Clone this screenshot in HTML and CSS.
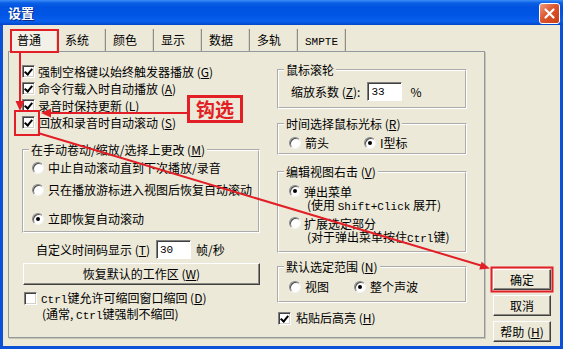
FILE: index.html
```html
<!DOCTYPE html>
<html lang="zh-CN">
<head>
<meta charset="utf-8">
<title>设置</title>
<link rel="stylesheet" href="styles.css">
</head>
<body>
<div class="win">
  <div class="titlebar">
    <span class="title">设置</span>
    <span class="close"><svg width="13" height="13" viewBox="0 0 13 13"><path d="M2.5 2.5 L10.5 10.5 M10.5 2.5 L2.5 10.5" stroke="#fff" stroke-width="2.2" stroke-linecap="round"/></svg></span>
  </div>
  <div class="client">
    <div class="tabarea">
      <div class="tabs">
        <div class="tab sel">普通</div>
        <div class="tab">系统</div>
        <div class="tab">颜色</div>
        <div class="tab">显示</div>
        <div class="tab">数据</div>
        <div class="tab">多轨</div>
        <div class="tab"><span class="m">SMPTE</span></div>
      </div>
      <div class="panel">
        <div class="col">
          <div class="chk-list">
            <div class="row"><span class="cb on"></span><span>强制空格键以始终触发器播放 (<u>G</u>)</span></div>
            <div class="row"><span class="cb on"></span><span>命令行载入时自动播放 (<u>A</u>)</span></div>
            <div class="row"><span class="cb on"></span><span>录音时保持更新 (<u>L</u>)</span></div>
            <div class="row"><span class="cb on"></span><span>回放和录音时自动滚动 (<u>S</u>)</span></div>
          </div>
          <fieldset class="grp g-left">
            <legend>在手动卷动/缩放/选择上更改 (<u>M</u>)</legend>
            <div class="gbody gl-body">
              <div class="row r1"><span class="rb"></span><span>中止自动滚动直到下次播放/录音</span></div>
              <div class="row r2"><span class="rb"></span><span>只在播放游标进入视图后恢复自动滚动</span></div>
              <div class="row r3"><span class="rb on"></span><span>立即恢复自动滚动</span></div>
            </div>
          </fieldset>
          <div class="tc-row"><span>自定义时间码显示 (<u>T</u>)</span><span class="inp tc-inp"><span class="m">30</span></span><span>帧/秒</span></div>
          <div class="btn wide">恢复默认的工作区 (<u>W</u>)</div>
          <div class="ctrl-row"><span class="cb"></span><div class="ctrl-text"><div><span class="m">Ctrl</span>键允许可缩回窗口缩回 (<u>D</u>)</div><div class="l2">(通常, <span class="m">Ctrl</span>键强制不缩回)</div></div></div>
        </div>
        <div class="col">
          <fieldset class="grp g1">
            <legend>鼠标滚轮</legend>
            <div class="gbody g1-body">
              <div class="zoom-row"><span>缩放系数 (<u>Z</u>):</span><span class="inp z-inp"><span class="m">33</span></span><span class="pct">%</span></div>
            </div>
          </fieldset>
          <fieldset class="grp g2">
            <legend>时间选择鼠标光标 (<u>R</u>)</legend>
            <div class="gbody g2-body">
              <div class="row"><span class="rb"></span><span class="opt1">箭头</span><span class="rb on"></span><span>I型标</span></div>
            </div>
          </fieldset>
          <fieldset class="grp g3">
            <legend>编辑视图右击 (<u>V</u>)</legend>
            <div class="gbody g3-body">
              <div class="mrow"><span class="rb on"></span><div><div>弹出菜单</div><div class="l2">(使用 <span class="m">Shift+Click</span> 展开)</div></div></div>
              <div class="mrow m2"><span class="rb"></span><div><div>扩展选定部分</div><div class="l2">(对于弹出菜单按住<span class="m">Ctrl</span>键)</div></div></div>
            </div>
          </fieldset>
          <fieldset class="grp g4">
            <legend>默认选定范围 (<u>N</u>)</legend>
            <div class="gbody g4-body">
              <div class="row"><span class="rb"></span><span class="opt2">视图</span><span class="rb on"></span><span>整个声波</span></div>
            </div>
          </fieldset>
          <div class="row paste"><span class="cb on"></span><span>粘贴后高亮 (<u>H</u>)</span></div>
        </div>
      </div>
    </div>
    <div class="btns">
      <div class="btn sbtn">确定</div>
      <div class="btn sbtn">取消</div>
      <div class="btn sbtn">帮助 (<u>H</u>)</div>
    </div>
  </div>

  <svg class="annot" width="563" height="349" viewBox="0 0 563 349">
    <g fill="none" stroke="#E21F26" stroke-width="2">
      <rect x="11" y="30" width="47" height="22"/>
      <line x1="20" y1="52" x2="20" y2="103"/>
      <rect x="15" y="111" width="24" height="24"/>
      <line x1="187" y1="113" x2="49" y2="113"/>
      <line x1="38" y1="133" x2="481" y2="265.5"/>
      <rect x="491.5" y="267.5" width="61" height="24"/>
    </g>
    <g fill="#E21F26">
      <polygon points="20,111 15.5,101 24.5,101"/>
      <polygon points="41,113 51,108.5 51,117.5"/>
      <polygon points="490,268.5 479.3,269.5 481.6,261.8"/>
    </g>
  </svg>
  <div class="tag">钩选</div>
</div>
</body>
</html>
```
FILE: styles.css
```css
* { box-sizing: border-box; }
html, body { margin: 0; padding: 0; }
body {
  width: 563px; height: 349px; overflow: hidden;
  background: #ECE9D8;
  font: 12px/14px "Noto Sans CJK SC", sans-serif;
  color: #000;
}
u { text-decoration: underline; text-underline-offset: 1px; }
.m { font-family: "Liberation Mono", monospace; font-size: 11px; }

.win {
  position: relative;
  width: 563px; height: 349px;
  display: flex; flex-direction: column;
  background: #ECE9D8;
}

/* title bar */
.titlebar {
  height: 25px; flex: none;
  display: flex; align-items: center; justify-content: space-between;
  padding: 0 3px 0 8px;
  background: linear-gradient(#3d8ef7 0, #0a5fe6 3px, #0053e0 7px, #0055e5 60%, #0a60ec 85%, #0046c9 100%);
}
.title {
  color: #fff; font-weight: bold; font-size: 13px; line-height: 16px;
  text-shadow: 1px 1px 0 #0a2a8a;
}
.close {
  width: 21px; height: 21px; margin-top: 1px;
  border: 1px solid #fff; border-radius: 3px;
  background: linear-gradient(135deg, #ee9a7c 0%, #dd5630 45%, #c83c12 100%);
  display: flex; align-items: center; justify-content: center;
}

/* client */
.client {
  flex: 1;
  display: flex;
  border: 3px solid #0a51d8; border-top: 0;
}
.tabarea {
  width: 482px; flex: none;
  padding: 4px 0 0 5px;
  display: flex; flex-direction: column;
}
.tabs { display: flex; height: 22px; padding-left: 2px; }
.tab {
  width: 48px; height: 22px;
  padding: 4px 0 0 7px;
  border-right: 1px solid #8e8e86;
  box-shadow: inset -1px 0 0 #d8d5c6;
}
.tab.sel { background: #f3f1e7; }

.panel {
  height: 287px;
  border: 1px solid #919b9c;
  box-shadow: 1px 1px 0 #c7c4b5;
  display: grid;
  grid-template-columns: 238px 190px;
  column-gap: 17px;
  align-items: start;
  padding: 11px 0 0 13px;
}
.col { display: flex; flex-direction: column; }

.row { display: flex; align-items: center; height: 17px; white-space: nowrap; }
.chk-list .row .cb { margin-right: 3px; }

/* checkbox */
.cb {
  flex: none;
  width: 13px; height: 13px;
  background: #fff;
  border: 1px solid; border-color: #808080 #fff #fff #808080;
  box-shadow: inset 1px 1px 0 #404040, inset -1px -1px 0 #d4d0c8;
  position: relative;
}
.cb.on::after {
  content: "";
  position: absolute; left: 2px; top: 1px;
  width: 3px; height: 6px;
  border: solid #000; border-width: 0 2px 2px 0;
  transform: translate(1px, 0) rotate(40deg);
}

/* radio */
.rb {
  flex: none;
  width: 12px; height: 12px; border-radius: 50%;
  background: #fff;
  border: 1px solid; border-color: #8a8a8a #f4f4f4 #f4f4f4 #8a8a8a;
  box-shadow: inset 1px 1px 0 #505050;
  position: relative;
  margin-right: 4px;
}
.rb.on::after {
  content: "";
  position: absolute; left: 3px; top: 3px;
  width: 4px; height: 4px; border-radius: 50%;
  background: #000;
}

/* group boxes */
.grp {
  margin: 0; padding: 0; min-width: 0;
  border: 2px groove #fff;
}
.grp legend {
  margin-left: 5px; padding: 0 2px;
  line-height: 14px; height: 14px;
}
.g-left { margin-top: 12px; width: 238px; }
.gl-body { padding: 3px 0 4px 8px; }
.gl-body .row { height: 16px; }
.gl-body .r2 { margin-top: 6px; }
.gl-body .r3 { margin-top: 13px; }

.tc-row {
  margin-top: 7px; height: 19px;
  display: flex; align-items: center;
  padding-left: 14px; white-space: nowrap;
}
.inp {
  background: #fff;
  border: 1px solid; border-color: #808080 #fff #fff #808080;
  box-shadow: inset 1px 1px 0 #404040;
  height: 19px;
  display: flex; align-items: center;
  padding-left: 3px;
}
.tc-inp { width: 35px; margin: 0 5px 0 6px; }

.btn {
  display: flex; align-items: center; justify-content: center;
  background: #ece9d8;
  border: 1px solid; border-color: #fff #404040 #404040 #fff;
  box-shadow: inset -1px -1px 0 #8c8a80;
  white-space: nowrap;
}
.btn.wide { margin: 4px 0 0 1px; height: 22px; width: 237px; }

.ctrl-row { margin-top: 6px; display: flex; align-items: flex-start; padding-left: 2px; }
.ctrl-row .cb { margin-top: 1px; margin-right: 4px; }
.ctrl-text { line-height: 13px; white-space: nowrap; }
.ctrl-text .l2 { padding-left: 1px; }

/* right column */
.g1-body { padding: 5px 0 6px 12px; }
.zoom-row { display: flex; align-items: center; height: 19px; white-space: nowrap; }
.z-inp { width: 35px; margin-left: 7px; }
.pct { margin-left: 8px; }

.g2 { margin-top: 8px; }
.g2-body { padding: 4px 0 2px 10px; }
.g2-body .row { height: 16px; }
.opt1 { width: 59px; }

.g3 { margin-top: 10px; }
.g3-body { padding: 6px 0 5px 10px; }
.mrow { display: flex; align-items: flex-start; line-height: 13px; white-space: nowrap; }
.mrow .rb { margin-top: 0; margin-right: 3px; }
.mrow .l2 { padding-left: 3px; }
.mrow.m2 { margin-top: 3px; }

.g4 { margin-top: 7px; }
.g4-body { padding: 5px 0 6px 10px; }
.g4-body .row { height: 16px; }
.opt2 { width: 49px; }

.paste { margin-top: 7px; height: 16px; padding-left: 1px; }
.paste .cb { margin-right: 5px; }

/* right buttons */
.btns {
  flex: 1;
  display: flex; flex-direction: column; justify-content: flex-end;
  gap: 5px;
  padding: 0 6px 4px 8px;
}
.sbtn { height: 21px; width: 58px; }

/* annotations */
.annot { position: absolute; left: 0; top: 0; pointer-events: none; }
.tag {
  position: absolute; left: 187px; top: 95px;
  width: 56px; height: 28px;
  border: 3px solid #E21F26;
  color: #E21F26;
  font-weight: bold; font-size: 19px; line-height: 22px;
  text-align: center;
}
```
